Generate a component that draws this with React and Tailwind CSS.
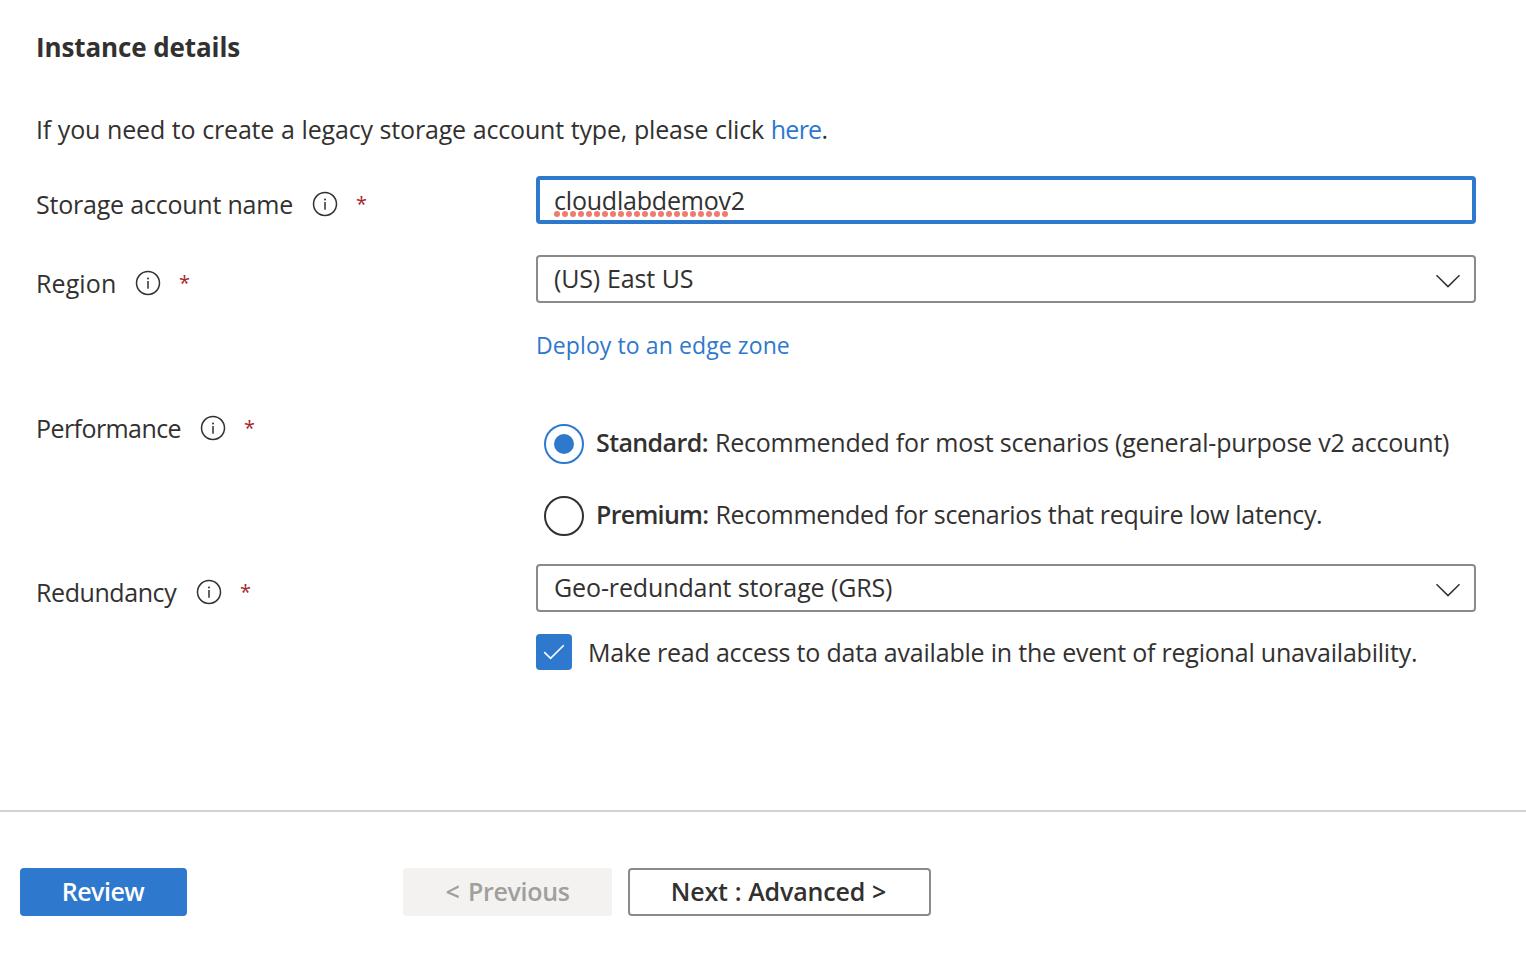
function InfoIcon() {
  return (
    <svg viewBox="0 0 26 26" className="h-[26px] w-[26px] shrink-0" fill="none" stroke="#323130">
      <circle cx="13" cy="13" r="11.5" strokeWidth="1.5" />
      <path d="M13 11v7.8" strokeWidth="1.5" />
      <circle cx="13" cy="8.4" r="1" fill="#323130" stroke="none" />
    </svg>
  );
}

function Label({ className, children }) {
  return (
    <div className="flex h-9 w-[500px] shrink-0 items-start">
      <span className={`shrink-0 whitespace-nowrap ${className}`}>{children}</span>
      <span className="mt-[5px]">
        <InfoIcon />
      </span>
      <span className="ml-[18px] text-[20px] leading-9 text-[#a4262c]">*</span>
    </div>
  );
}

function Select({ className, children }) {
  return (
    <div className="flex h-12 w-[940px] items-center justify-between rounded-[4px] border-2 border-[#8a8a8a] pr-[13px] pl-4">
      <span className={`-mt-[3px] ${className}`}>{children}</span>
      <svg viewBox="0 0 26 14" className="mt-[3px] h-[14px] w-[26px]" fill="none" stroke="#323130" strokeWidth="1.5">
        <path d="M1.5 1.3 13 12.6 24.5 1.3" />
      </svg>
    </div>
  );
}

function Radio({ checked, children }) {
  return (
    <label className="flex h-10 items-start">
      <span
        className={`mr-3 flex h-10 w-10 shrink-0 items-center justify-center rounded-full border-2 ${
          checked ? "border-[#2e78cd]" : "border-[#323130]"
        }`}
      >
        {checked && <span className="h-5 w-5 rounded-full bg-[#2e78cd]" />}
      </span>
      {children}
    </label>
  );
}

const misspellingDots = Array.from({ length: 22 }, (_, i) => 3 + i * 8);

export default function App() {
  return (
    <div className="flex h-[968px] w-[1526px] flex-col bg-white font-['Open_Sans','Noto_Sans',sans-serif] text-[25px] leading-9 text-[#323130]">
      <main className="flex h-[810px] flex-col pt-[29px] pl-9">
        <h2 className="text-[26px] font-bold tracking-[-0.11px]">Instance details</h2>
        <p className="mt-[46px] whitespace-nowrap tracking-[-0.18px] [word-spacing:0.5px]">
          If you need to create a legacy storage account type, please click{" "}
          <a className="tracking-[-0.75px] text-[#2e78cd]">here</a>.
        </p>

        <div className="mt-[29px] flex h-12">
          <div className="pt-[10px]">
            <Label className="w-[276px] tracking-[-0.21px]">Storage account name</Label>
          </div>
          <div className="flex h-12 w-[940px] items-center rounded-[4px] border-4 border-[#2e78cd] pl-[14px]">
            <span className="relative tracking-[-0.2px]">
              <svg viewBox="0 0 174 6" className="absolute top-[29px] left-0 h-[6px] w-[174px]" fill="#f27b70">
                {misspellingDots.map((x) => (
                  <circle key={x} cx={x} cy="3" r="3" />
                ))}
              </svg>
              <span className="relative">cloudlabdemov2</span>
            </span>
          </div>
        </div>

        <div className="mt-[31px] flex">
          <div className="pt-[10px]">
            <Label className="w-[99px] tracking-[0.1px]">Region</Label>
          </div>
          <div>
            <Select className="tracking-[-0.15px] [word-spacing:0.5px]">(US) East US</Select>
            <a className="mt-[26px] block text-[23px] leading-8 tracking-[0.1px] text-[#2e78cd]">
              Deploy to an edge zone
            </a>
          </div>
        </div>

        <div className="mt-[49px] flex">
          <Label className="w-[164px] tracking-[-0.57px]">Performance</Label>
          <div className="flex flex-col gap-8 pt-[14px] pl-2 whitespace-nowrap">
            <Radio checked>
              <span>
                <b className="mr-[7px] font-semibold tracking-[-0.6px]">Standard:</b>
                <span className="tracking-[-0.19px]">
                  Recommended for most scenarios (general-purpose v2 account)
                </span>
              </span>
            </Radio>
            <Radio>
              <span>
                <b className="mr-[7px] font-semibold tracking-[-0.7px]">Premium:</b>
                <span className="tracking-[-0.31px]">Recommended for scenarios that require low latency.</span>
              </span>
            </Radio>
          </div>
        </div>

        <div className="mt-7 flex">
          <div className="pt-[10px]">
            <Label className="w-[160px] tracking-[-0.42px]">Redundancy</Label>
          </div>
          <div>
            <Select className="tracking-[-0.12px]">Geo-redundant storage (GRS)</Select>
            <label className="mt-[22px] flex h-9">
              <span className="mr-4 flex h-9 w-9 items-center justify-center rounded-[4px] bg-[#2e78cd]">
                <svg viewBox="0 0 22 16" className="h-4 w-[22px]" fill="none" stroke="#fff" strokeWidth="1.6">
                  <path d="M1.2 8.2 7.6 14.3 20.8 1.2" />
                </svg>
              </span>
              <span className="whitespace-nowrap tracking-[-0.21px]">
                Make read access to data available in the event of regional unavailability.
              </span>
            </label>
          </div>
        </div>
      </main>

      <footer className="flex border-t-2 border-[#d2d2d2] pt-14 pl-5 font-semibold">
        <button className="flex h-12 w-[167px] items-center justify-center rounded-[4px] bg-[#2e78cd] pr-px pb-[2px] tracking-[-0.5px] text-white">
          Review
        </button>
        <button className="ml-[216px] flex h-12 w-[209px] items-center justify-center rounded-[4px] bg-[#f3f2f1] pb-[2px] tracking-[-0.35px] [word-spacing:2.5px] text-[#a19f9d]">
          &lt; Previous
        </button>
        <button className="ml-4 flex h-12 w-[303px] items-center justify-center rounded-[4px] border-2 border-[#8a8a8a] pr-[2px] pb-[2px] tracking-[-0.15px] [word-spacing:0.5px]">
          Next : Advanced &gt;
        </button>
      </footer>
    </div>
  );
}
